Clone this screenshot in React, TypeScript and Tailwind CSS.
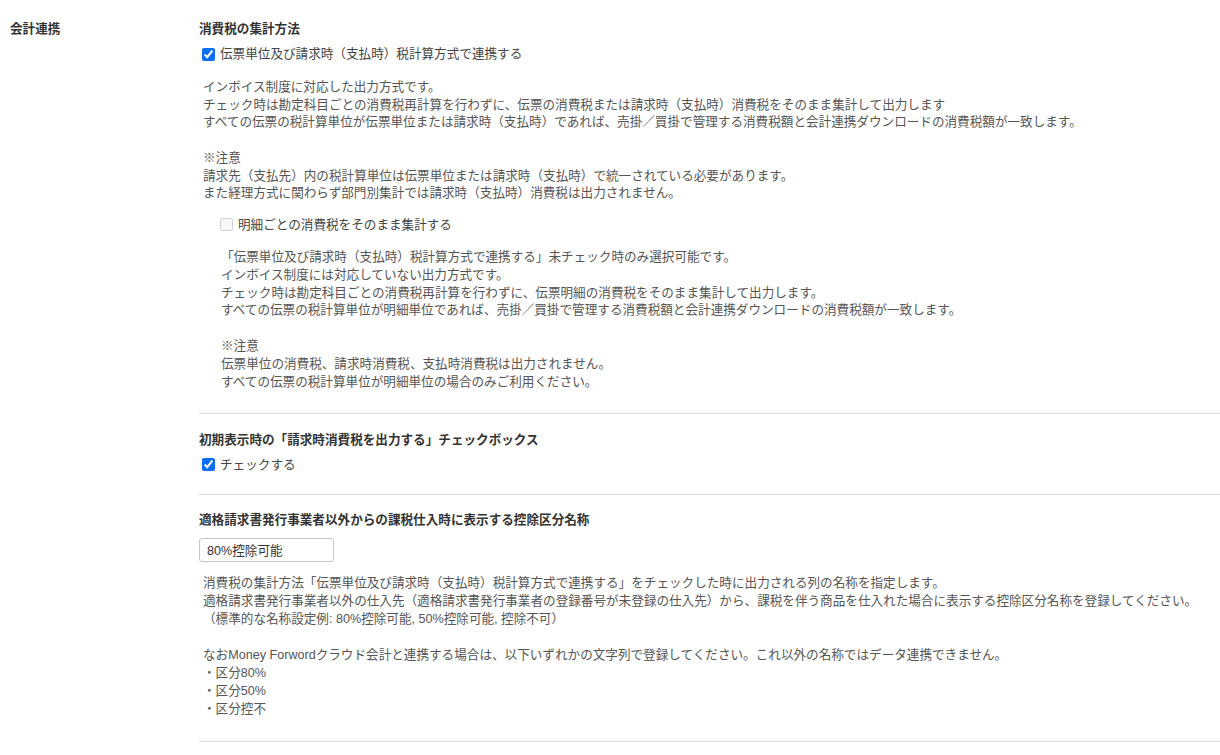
import { useState } from "react";

const font = { fontFamily: '"Liberation Sans", "Noto Sans CJK JP", sans-serif' };

function Check({
  checked,
  disabled,
  label,
  onChange,
}: {
  checked: boolean;
  disabled?: boolean;
  label: string;
  onChange?: (v: boolean) => void;
}) {
  return (
    <label className="flex items-center gap-[5px] h-[18px] text-[12.6px] leading-[18px] text-[#444]">
      <input
        type="checkbox"
        checked={checked}
        disabled={disabled}
        onChange={(e) => onChange?.(e.target.checked)}
        className="m-0 w-[13px] h-[13px] accent-[#0b6ef5]"
      />
      <span>{label}</span>
    </label>
  );
}

function Lines({ lines, className }: { lines: string[]; className: string }) {
  return (
    <div className={className}>
      {lines.map((l, i) => (
        <div key={i} className="whitespace-pre">
          {l === "" ? "\u00a0" : l}
        </div>
      ))}
    </div>
  );
}

export default function App() {
  const [linked, setLinked] = useState(true);
  const [showTax, setShowTax] = useState(true);
  const [name, setName] = useState("80%控除可能");

  return (
    <div className="min-h-screen bg-white text-[#333]" style={font}>
      <div className="flex">
        {/* 左ラベル */}
        <div className="w-[199px] shrink-0 pl-[10px] pt-[20px]">
          <div className="text-[12.6px] leading-[18px] font-bold text-[#333]">会計連携</div>
        </div>

        {/* 設定本体 */}
        <div className="flex-1 pt-[20px]">
          <div className="text-[12.6px] leading-[18px] font-bold text-[#333]">消費税の集計方法</div>
          <div className="mt-[7px] pl-[3px]">
            <Check checked={linked} label="伝票単位及び請求時（支払時）税計算方式で連携する" onChange={setLinked} />
          </div>
          <Lines
            className="mt-[16px] pl-[4px] text-[12.6px] leading-[17.7px] text-[#555]"
            lines={[
              "インボイス制度に対応した出力方式です。",
              "チェック時は勘定科目ごとの消費税再計算を行わずに、伝票の消費税または請求時（支払時）消費税をそのまま集計して出力します",
              "すべての伝票の税計算単位が伝票単位または請求時（支払時）であれば、売掛／買掛で管理する消費税額と会計連携ダウンロードの消費税額が一致します。",
              "",
              "※注意",
              "請求先（支払先）内の税計算単位は伝票単位または請求時（支払時）で統一されている必要があります。",
              "また経理方式に関わらず部門別集計では請求時（支払時）消費税は出力されません。",
            ]}
          />
          <div className="mt-[13px] pl-[21px]">
            <Check checked={false} disabled label="明細ごとの消費税をそのまま集計する" />
          </div>
          <Lines
            className="mt-[15px] pl-[22px] text-[12.6px] leading-[17.85px] text-[#555]"
            lines={[
              "「伝票単位及び請求時（支払時）税計算方式で連携する」未チェック時のみ選択可能です。",
              "インボイス制度には対応していない出力方式です。",
              "チェック時は勘定科目ごとの消費税再計算を行わずに、伝票明細の消費税をそのまま集計して出力します。",
              "すべての伝票の税計算単位が明細単位であれば、売掛／買掛で管理する消費税額と会計連携ダウンロードの消費税額が一致します。",
              "",
              "※注意",
              "伝票単位の消費税、請求時消費税、支払時消費税は出力されません。",
              "すべての伝票の税計算単位が明細単位の場合のみご利用ください。",
            ]}
          />

          <div className="mt-[21px] border-t border-[#dcdcdc]" />

          <div className="mt-[17px] text-[12.6px] leading-[18px] font-bold text-[#333]">
            初期表示時の「請求時消費税を出力する」チェックボックス
          </div>
          <div className="mt-[7px] pl-[3px]">
            <Check checked={showTax} label="チェックする" onChange={setShowTax} />
          </div>

          <div className="mt-[20px] border-t border-[#dcdcdc]" />

          <div className="mt-[16px] text-[12.6px] leading-[18px] font-bold text-[#333]">
            適格請求書発行事業者以外からの課税仕入時に表示する控除区分名称
          </div>
          <input
            value={name}
            onChange={(e) => setName(e.target.value)}
            className="mt-[9px] block w-[135px] h-[24px] px-[7px] border border-[#c4c4c4] rounded-[3px] text-[12.6px] text-[#333] outline-none"
          />
          <Lines
            className="mt-[12px] pl-[4px] text-[12.6px] leading-[18.1px] text-[#555]"
            lines={[
              "消費税の集計方法「伝票単位及び請求時（支払時）税計算方式で連携する」をチェックした時に出力される列の名称を指定します。",
              "適格請求書発行事業者以外の仕入先（適格請求書発行事業者の登録番号が未登録の仕入先）から、課税を伴う商品を仕入れた場合に表示する控除区分名称を登録してください。",
              "（標準的な名称設定例: 80%控除可能, 50%控除可能, 控除不可）",
              "",
              "なおMoney Forwordクラウド会計と連携する場合は、以下いずれかの文字列で登録してください。これ以外の名称ではデータ連携できません。",
              "・区分80%",
              "・区分50%",
              "・区分控不",
            ]}
          />

          <div className="mt-[23px] border-t border-[#dcdcdc]" />
        </div>
      </div>
    </div>
  );
}
